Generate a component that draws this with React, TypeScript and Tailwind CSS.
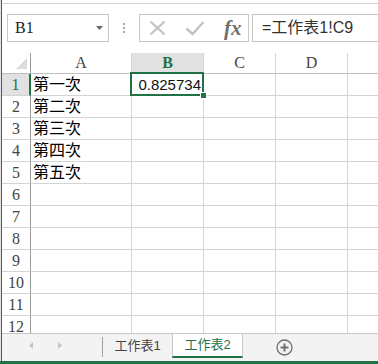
import React from "react";

const serif = "font-['Liberation_Serif','Noto_Sans_CJK_TC',serif]";
const sans = "font-['Liberation_Sans','Noto_Sans_CJK_TC',sans-serif]";

const rows: { a?: string; b?: string }[] = [
  { a: "第一次", b: "0.825734" },
  { a: "第二次" },
  { a: "第三次" },
  { a: "第四次" },
  { a: "第五次" },
  {},
  {},
  {},
  {},
  {},
  {},
  {},
];

function FormulaBar() {
  return (
    <div className="flex h-[49px] shrink-0 items-start pt-[10px]">
      {/* name box */}
      <div className="ml-[5px] flex h-[28px] w-[102px] items-center justify-between border border-[#c6c6c6] pl-[7px] pr-[5px]">
        <span className={`${serif} text-[16px] text-[#222]`}>B1</span>
        <svg width="7" height="4" viewBox="0 0 7 4">
          <path d="M0 0h7L3.5 4z" fill="#6a6a6a" />
        </svg>
      </div>
      {/* grip dots */}
      <div className="ml-[14px] flex h-[28px] flex-col items-center justify-center gap-[2px]">
        <span className="h-[2px] w-[2px] bg-[#a8a8a8]" />
        <span className="h-[2px] w-[2px] bg-[#a8a8a8]" />
        <span className="h-[2px] w-[2px] bg-[#a8a8a8]" />
      </div>
      {/* cancel / enter / fx */}
      <div className="ml-[14px] flex h-[28px] w-[110px] items-center border border-[#c6c6c6] pl-[9px]">
        <svg width="17" height="16" viewBox="0 0 17 16">
          <path d="M1.5 1.5L15.5 14.5M15.5 1.5L1.5 14.5" stroke="#c2c2c2" strokeWidth="2.2" />
        </svg>
        <svg className="ml-[19px]" width="20" height="16" viewBox="0 0 20 16">
          <path d="M1.5 8.5L7.5 14L18.5 2" stroke="#c2c2c2" strokeWidth="2.4" fill="none" />
        </svg>
        <span className={`ml-[19px] ${serif} text-[21px] font-bold italic leading-none text-[#707070]`}>fx</span>
      </div>
      {/* formula input */}
      <div className="ml-[3px] flex h-[28px] flex-1 items-center border-y border-l border-[#c6c6c6] pl-[9px]">
        <span className={`${sans} text-[16px] text-[#333]`}>=工作表1!C9</span>
      </div>
    </div>
  );
}

function Grid() {
  return (
    <div className="relative flex-1 overflow-hidden">
      {/* column headers */}
      <div className={`flex h-[21px] ${serif} text-[16px] text-[#444]`}>
        <div className="flex h-full w-[29px] shrink-0 items-end justify-end border-b border-r border-b-[#bfbfbf] border-r-[#9b9b9b] pb-[4px] pr-[3px]">
          <svg width="11" height="11" viewBox="0 0 11 11">
            <path d="M11 0V11H0z" fill="#dcdcdc" />
          </svg>
        </div>
        <div className="flex h-full w-[101px] shrink-0 items-center justify-center border-b border-r border-b-[#bfbfbf] border-r-[#d4d4d4]">A</div>
        <div className="flex h-full w-[72px] shrink-0 items-center justify-center border-b-2 border-r border-b-[#217346] border-r-[#d4d4d4] bg-[#e1e1e1] pt-[1px] font-bold text-[#217346]">B</div>
        <div className="flex h-full w-[72px] shrink-0 items-center justify-center border-b border-r border-b-[#bfbfbf] border-r-[#d4d4d4]">C</div>
        <div className="flex h-full w-[72px] shrink-0 items-center justify-center border-b border-r border-b-[#bfbfbf] border-r-[#d4d4d4]">D</div>
        <div className="h-full flex-1 border-b border-b-[#bfbfbf]" />
      </div>

      {rows.map((r, i) => {
        const sel = i === 0;
        return (
          <div key={i} className="flex h-[22px]">
            <div
              className={`flex h-full w-[29px] shrink-0 items-center justify-center border-b border-b-[#d4d4d4] pt-[1px] ${serif} text-[16px] ${
                sel ? "border-r-2 border-r-[#217346] bg-[#e1e1e1] text-[#217346]" : "border-r border-r-[#9b9b9b] text-[#444]"
              }`}
            >
              {i + 1}
            </div>
            <div className={`flex h-full w-[101px] shrink-0 items-center border-b border-r border-[#d4d4d4] pl-[2px] pt-[1px] ${sans} text-[16px] text-black`}>
              {r.a}
            </div>
            <div className={`flex h-full w-[72px] shrink-0 items-center justify-end border-b border-r border-[#d4d4d4] pr-[2px] pt-[1px] ${sans} text-[15px] text-[#111]`}>
              {r.b}
            </div>
            <div className="h-full w-[72px] shrink-0 border-b border-r border-[#d4d4d4]" />
            <div className="h-full w-[72px] shrink-0 border-b border-r border-[#d4d4d4]" />
            <div className="h-full flex-1 border-b border-[#d4d4d4]" />
          </div>
        );
      })}

      {/* active cell selection */}
      <div className="absolute left-[128px] top-[19px] h-[24px] w-[74px] border-2 border-[#217346]" />
      <div className="absolute left-[198px] top-[39px] h-[7px] w-[7px] border border-white bg-[#217346]" />
    </div>
  );
}

function SheetTabs() {
  return (
    <div className={`flex h-[28px] shrink-0 items-start border-t border-[#c6c6c6] bg-[#f3f3f3] ${sans}`}>
      <div className="flex h-[23px] w-[100px] shrink-0 items-center pl-[27px]">
        <svg width="4" height="7" viewBox="0 0 4 7">
          <path d="M4 0V7L0 3.5z" fill="#c4c4c4" />
        </svg>
        <svg className="ml-[25px]" width="4" height="7" viewBox="0 0 4 7">
          <path d="M0 0V7L4 3.5z" fill="#c4c4c4" />
        </svg>
      </div>
      <div className="mt-[3px] h-[20px] w-px bg-[#a0a0a0]" />
      <div className="flex h-[23px] w-[69px] shrink-0 items-center justify-center text-[13px] text-[#444]">工作表1</div>
      <div className="flex h-[24px] w-[71px] shrink-0 items-center justify-center border-x border-b-2 border-x-[#c6c6c6] border-b-[#217346] bg-white text-[13px] text-[#217346]">
        工作表2
      </div>
      <svg className="ml-[33px] mt-[5px]" width="17" height="17" viewBox="0 0 17 17">
        <circle cx="8.5" cy="8.5" r="7.5" fill="none" stroke="#707070" strokeWidth="1.3" />
        <path d="M8.5 4.5V12.5M4.5 8.5H12.5" stroke="#707070" strokeWidth="2" />
      </svg>
    </div>
  );
}

export default function App() {
  return (
    <div className="flex h-[364px] w-[378px] flex-col overflow-hidden bg-white">
      <div className="flex min-h-0 flex-1">
        <div className="w-px bg-[#e4e4e4]" />
        <div className="w-px bg-[#217346]" />
        <div className="flex min-w-0 flex-1 flex-col">
          <div className="h-[4px] shrink-0 border-b border-[#d4d4d4]" />
          <FormulaBar />
          <Grid />
          <SheetTabs />
        </div>
      </div>
      <div className="h-[3px] shrink-0 bg-[#217346]" />
    </div>
  );
}
